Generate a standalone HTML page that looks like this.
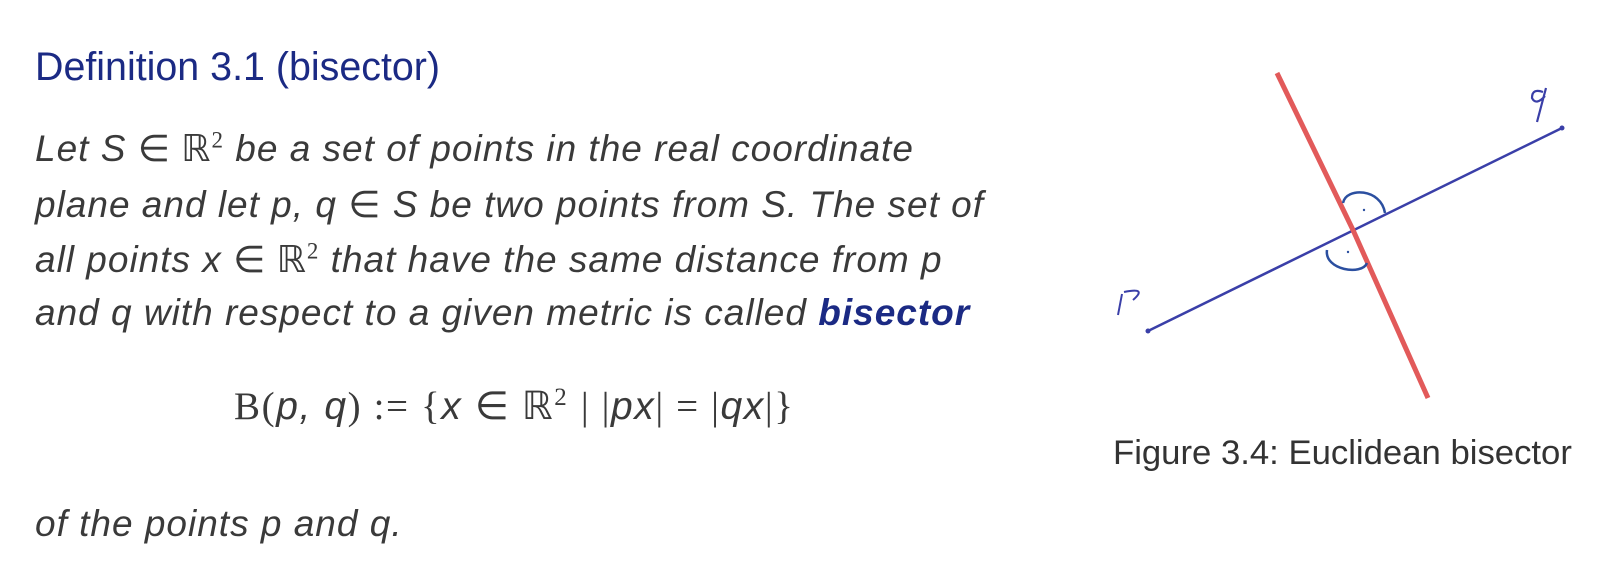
<!DOCTYPE html>
<html><head><meta charset="utf-8"><style>
body{margin:0;width:1622px;height:582px;background:#fff;position:relative;overflow:hidden;font-family:"Liberation Sans","DejaVu Sans",sans-serif;}
.t{position:absolute;left:35px;white-space:nowrap;}
.h{color:#1b2a84;font-size:39.4px;top:45px;}
.l{font-style:italic;color:#3a3a3a;font-size:37px;letter-spacing:1px;}
.m{font-family:"Liberation Serif",serif;font-style:normal;}
sup{font-size:23px;font-style:normal;font-family:"Liberation Serif",serif;}
b{color:#1b2a84;}
.f{font-size:39px;letter-spacing:1.6px;}
.f sup{font-size:25px;}
.cap{position:absolute;left:1113px;top:434px;font-size:34.7px;color:#333;}
</style></head><body>
<div class="t h">Definition 3.1 (bisector)</div>
<div class="t l" style="top:127px">Let S <span class="m">∈ ℝ</span><sup>2</sup> be a set of points in the real coordinate</div>
<div class="t l" style="top:183px">plane and let p, q <span class="m">∈</span> S be two points from S. The set of</div>
<div class="t l" style="top:238px">all points x <span class="m">∈ ℝ</span><sup>2</sup> that have the same distance from p</div>
<div class="t l" style="top:292px">and q with respect to a given metric is called <b>bisector</b></div>
<div class="t l f" style="top:384px;left:234px"><span class="m">B(</span>p, q<span class="m">) := {</span>x <span class="m">∈ ℝ</span><sup>2</sup> <span class="m">| |</span>px<span class="m">| = |</span>qx<span class="m">|}</span></div>
<div class="t l" style="top:503px">of the points p and q.</div>
<svg style="position:absolute;left:0;top:0" width="1622" height="582">
<line x1="1148" y1="331" x2="1562" y2="128" stroke="#3a3fa8" stroke-width="2.5"/>
<circle cx="1562" cy="128" r="2.5" fill="#3a3fa8"/>
<circle cx="1148" cy="331" r="2.5" fill="#3a3fa8"/>
<path d="M1277 73 L1353 230 L1428 398" stroke="#e25a5a" stroke-width="5" fill="none" stroke-linejoin="round"/>
<path d="M1343 203 C1346 187, 1381 188, 1385 213" stroke="#2b4fa0" stroke-width="2.5" fill="none"/>
<path d="M1327 250 C1324 270, 1362 276, 1367 263" stroke="#2b4fa0" stroke-width="2.5" fill="none"/>
<circle cx="1364" cy="210" r="1.2" fill="#2b4fa0"/>
<circle cx="1348" cy="252" r="1.2" fill="#2b4fa0"/>
<path d="M1118 315 L1122 294 M1124 292 Q1148 287 1133 300" stroke="#3a3fa8" stroke-width="2" fill="none"/>
<path d="M1543 92 Q1532 88 1532 98 Q1536 106 1545 96 M1546 88 L1537 122" stroke="#3a3fa8" stroke-width="2.2" fill="none"/>
</svg>
<div class="cap">Figure 3.4: Euclidean bisector</div>
</body></html>
